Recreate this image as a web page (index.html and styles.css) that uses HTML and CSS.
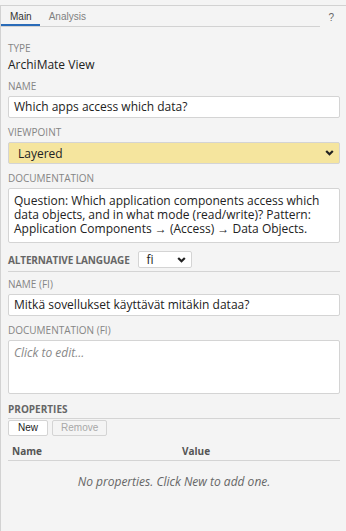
FILE: index.html
```html
<!DOCTYPE html>
<html>
<head>
<meta charset="utf-8">
<link rel="stylesheet" href="styles.css">
</head>
<body>
<div class="panel">
  <div class="tabbar">
    <div class="tabs">
      <span class="tab active">Main</span>
      <span class="tab">Analysis</span>
    </div>
    <span class="help">?</span>
  </div>
  <div class="content">
    <div class="label first">TYPE</div>
    <div class="value">ArchiMate View</div>

    <div class="label after-value">NAME</div>
    <div class="input">Which apps access which data?</div>

    <div class="label">VIEWPOINT</div>
    <div class="select yellow"><span>Layered</span><svg class="chev" viewBox="0 0 9 6" width="9" height="6"><path d="M1.2 1 L4.5 4.3 L7.8 1" fill="none" stroke="#222" stroke-width="2.2"/></svg></div>

    <div class="label">DOCUMENTATION</div>
    <div class="textarea">Question: Which application components access which data objects, and in what mode (read/write)? Pattern: Application Components → (Access) → Data Objects.</div>

    <div class="altrow">
      <span class="blabel alt">ALTERNATIVE LANGUAGE</span>
      <div class="select small"><span>fi</span><svg class="chev" viewBox="0 0 9 6" width="9" height="6"><path d="M1.2 1 L4.5 4.3 L7.8 1" fill="none" stroke="#222" stroke-width="2.2"/></svg></div>
    </div>

    <div class="label after-alt">NAME (FI)</div>
    <div class="input">Mitkä sovellukset käyttävät mitäkin dataa?</div>

    <div class="label">DOCUMENTATION (FI)</div>
    <div class="textarea short"><span class="placeholder">Click to edit...</span></div>

    <div class="blabel props">PROPERTIES</div>
    <div class="buttons">
      <span class="btn">New</span>
      <span class="btn disabled">Remove</span>
    </div>
    <div class="thead">
      <span class="th name">Name</span>
      <span class="th">Value</span>
    </div>
    <div class="empty-msg">No properties. Click New to add one.</div>
  </div>
</div>
</body>
</html>
```

FILE: styles.css
```css
html, body {
  margin: 0;
  padding: 0;
  background: #f4f4f4;
}
body {
  font-family: "Open Sans", sans-serif;
  color: #222;
}
.panel {
  margin-top: 5px;
  border-top: 1px solid #d2d2d2;
  border-left: 1px solid #d2d2d2;
  height: 525px;
}
.tabbar {
  display: flex;
  justify-content: space-between;
  align-items: flex-start;
}
.tabs {
  display: flex;
  width: 319px;
  border-bottom: 1px solid #d2d2d2;
  height: 20px;
}
.tab {
  font-family: "Liberation Sans", Arial, sans-serif;
  font-size: 10px;
  line-height: 11px;
  color: #808080;
  padding: 5px 9px 2px 9px;
  height: 11px;
  border-bottom: 2px solid transparent;
}
.tab.active {
  color: #333;
  border-bottom-color: #2a6bb8;
  padding-right: 8px;
}
.help {
  font-family: "Liberation Sans", Arial, sans-serif;
  font-size: 10px;
  line-height: 11px;
  color: #666;
  padding-top: 6px;
  margin-right: 12px;
}
.content {
  padding: 14px 6px 0 7px;
}
.label {
  font-size: 10px;
  color: #858585;
  line-height: 14px;
  margin-top: 7px;
  margin-bottom: 3px;
}
.label.first { margin-top: 0; }
.label.after-value { margin-top: 6px; }
.label.after-alt { margin-top: 5px; }
.value {
  font-size: 12px;
  line-height: 16px;
  margin-top: -1px;
}
.input, .textarea, .select {
  background: #fff;
  border: 1px solid #d4d4d4;
  border-radius: 2px;
  font-size: 12px;
  box-sizing: border-box;
}
.input {
  height: 22px;
  line-height: 20px;
  padding: 0 5px;
}
.select {
  height: 22px;
  display: flex;
  align-items: center;
  justify-content: space-between;
  padding: 0 5px 0 9px;
}
.select.yellow {
  background: #f5e59e;
}
.textarea {
  padding: 5px 5px;
  line-height: 14px;
  height: 55px;
}
.textarea.short {
  height: 54px;
}
.placeholder {
  font-style: italic;
  color: #888;
}
.altrow {
  display: flex;
  align-items: center;
  gap: 8px;
  margin-top: 8px;
  padding-bottom: 3px;
  border-bottom: 1px solid #d4d4d4;
}
.blabel {
  font-size: 10px;
  font-weight: bold;
  line-height: 14px;
  color: #666;
}
.blabel.alt {
  letter-spacing: -0.15px;
}
.select.small {
  width: 54px;
  height: 17px;
  font-size: 12px;
  padding: 0 5px 0 8px;
}
.props {
  margin-top: 8px;
  padding-bottom: 2px;
  border-bottom: 1px solid #d4d4d4;
}
.buttons {
  display: flex;
  gap: 4px;
  margin-top: 1px;
}
.btn {
  font-family: "Liberation Sans", Arial, sans-serif;
  font-size: 10px;
  line-height: 12px;
  background: #fff;
  border: 1px solid #d4d4d4;
  border-radius: 2px;
  padding: 1px 9px;
  color: #222;
}
.btn.disabled {
  background: #f4f4f4;
  color: #a8a8a8;
  padding: 1px 8px;
}
.thead {
  display: flex;
  margin-top: 8px;
  padding: 0 4px 2px;
  border-bottom: 1px solid #d4d4d4;
}
.th {
  font-size: 10px;
  font-weight: bold;
  line-height: 14px;
  color: #555;
}
.th.name { width: 170px; }
.empty-msg {
  text-align: center;
  font-size: 12px;
  line-height: 16px;
  font-style: italic;
  color: #666;
  margin-top: 13px;
}
```
